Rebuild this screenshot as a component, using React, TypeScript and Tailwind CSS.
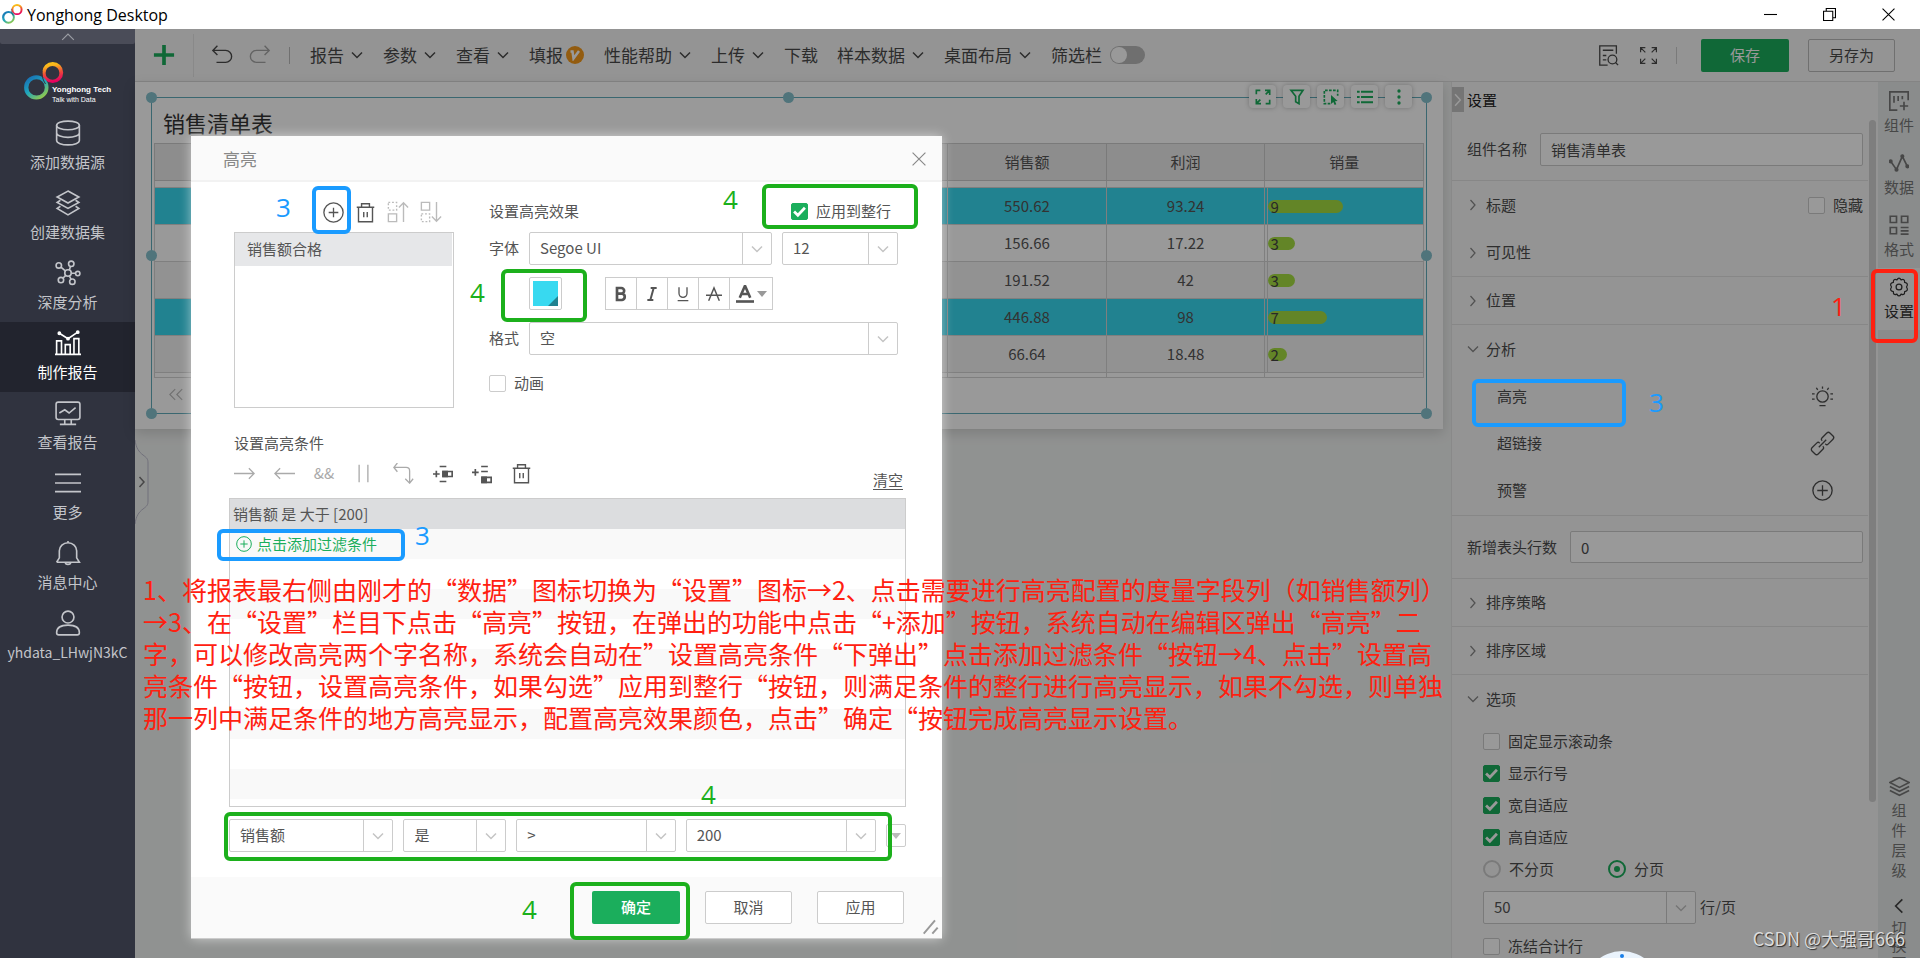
import { useState } from 'react';
import type { ReactNode } from 'react';
import clsx from 'clsx';

function Icon({ size = 20, className, sw = 1.5, children }: { size?: number; className?: string; sw?: number; children: ReactNode }) {
  return (
    <svg
      width={size}
      height={size}
      viewBox="0 0 24 24"
      fill="none"
      stroke="currentColor"
      strokeWidth={sw}
      className={clsx('shrink-0', className)}
      aria-hidden="true"
    >
      {children}
    </svg>
  );
}

function Chevron({ dir = 'down', size = 12, className, sw = 3 }: { dir?: 'down' | 'right' | 'left' | 'up'; size?: number; className?: string; sw?: number }) {
  const paths = {
    down: 'M2 7l10 10L22 7',
    right: 'M7 2l9 10-9 10',
    left: 'M17 2L7 12l10 10',
    up: 'M2 17L12 7l10 10',
  };
  return (
    <Icon size={size} sw={sw} className={className}>
      <path d={paths[dir]} />
    </Icon>
  );
}

function Rings({ size }: { size: number }) {
  return (
    <svg width={size} height={size} viewBox="0 0 40 40" className="shrink-0" aria-hidden="true">
      <defs>
        <linearGradient id="warm" x1="0" y1="0" x2="0.2" y2="1">
          <stop offset="0" stopColor="#fbc916" />
          <stop offset="0.25" stopColor="#f9b51c" />
          <stop offset="0.6" stopColor="#ee4a3a" />
          <stop offset="1" stopColor="#e6005f" />
        </linearGradient>
        <linearGradient id="cool" x1="0.1" y1="0" x2="0.8" y2="1">
          <stop offset="0" stopColor="#1765b3" />
          <stop offset="0.5" stopColor="#1fa6bd" />
          <stop offset="1" stopColor="#a4cf3a" />
        </linearGradient>
      </defs>
      <path
        fillRule="evenodd"
        fill="url(#warm)"
        d="M28.700 0a10.500 10.500 0 1 1 0 21a10.500 10.500 0 1 1 0-21zM28.500 4a6.900 6.900 0 1 0 0 13.800a6.900 6.900 0 1 0 0-13.800z"
      />
      <path
        fillRule="evenodd"
        fill="url(#cool)"
        d="M12.300 13.200a12.200 12.200 0 1 1 0 24.400a12.200 12.200 0 1 1 0-24.400zM12.600 17.200a8.200 8.200 0 1 0 0 16.400a8.200 8.200 0 1 0 0-16.400z"
      />
      <path d="M18 9c-.5 5 1 9 3.500 13" stroke="#30333f" strokeWidth="1" fill="none" />
    </svg>
  );
}

const TrashIcon = ({ className }: { className?: string }) => (
  <Icon size={21} className={className} sw={1.6}>
    <path d="M2 6h20M7.500 6V2h9v4M4 6v16.500h16V6M10 11.500v6M14 11.500v6" />
  </Icon>
);

const PlusCircle = ({ size = 22, className }: { size?: number; className?: string }) => (
  <Icon size={size} className={className}>
    <circle cx="12" cy="12" r="11" />
    <path d="M12 6.500v11M6.500 12h11" />
  </Icon>
);

function Select({ label, value, className }: { label: string; value: string; className?: string }) {
  return (
    <div className={clsx('relative h-[33px] rounded-xs border border-[#ccc] bg-white', className)}>
      <select aria-label={label} className="h-full w-full appearance-none bg-transparent pl-[10px] text-[15px] text-[#555] outline-none">
        <option>{value}</option>
      </select>
      <span className="pointer-events-none absolute inset-y-0 right-0 flex w-[29px] items-center justify-center border-l border-[#ccc] text-[#c4c4c4]">
        <Chevron size={12} />
      </span>
    </div>
  );
}

function Checkbox({ label, checked = false }: { label: string; checked?: boolean }) {
  const [on, setOn] = useState(checked);
  return (
    <label className="flex items-center gap-2 text-[15px]">
      <span className="relative flex h-[17px] w-[17px] shrink-0">
        <input
          type="checkbox"
          checked={on}
          onChange={() => setOn(!on)}
          className="h-[17px] w-[17px] appearance-none rounded-xs border border-[#ccc] bg-white checked:border-[#1bae5c] checked:bg-[#1bae5c]"
        />
        {on && (
          <Icon size={13} sw={5} className="pointer-events-none absolute top-0.5 left-0.5 text-white">
            <path d="M2 12l7 7L22 5" />
          </Icon>
        )}
      </span>
      {label}
    </label>
  );
}

const navItems = [
  {
    label: '添加数据源',
    icon: (
      <>
        <ellipse cx="12" cy="5" rx="10.500" ry="4" />
        <path d="M1.500 5v14c0 2.200 4.700 4 10.500 4s10.500-1.800 10.500-4V5M1.500 12c0 2.200 4.700 4 10.500 4s10.500-1.800 10.500-4" />
      </>
    ),
  },
  {
    label: '创建数据集',
    icon: <path d="M12 1l10 5.500L12 12 2 6.500zM5 9.500l-3 2L12 17l10-5.500-3-2M5 15l-3 2 10 6 10-6-3-2" />,
  },
  {
    label: '深度分析',
    icon: (
      <>
        <circle cx="12" cy="12" r="3" />
        <circle cx="3.500" cy="5" r="2.500" />
        <circle cx="15" cy="3.500" r="2.500" />
        <circle cx="21" cy="12.500" r="2" />
        <circle cx="5.500" cy="18.500" r="2.500" />
        <circle cx="16" cy="20" r="2.500" />
        <path d="M5.500 6.500l4 3.500M14.300 6l-1.100 3.200M15 12.200h4M7.300 16.800l2.600-2.600M13.300 14.800l1.600 3" />
      </>
    ),
  },
  {
    label: '制作报告',
    active: true,
    icon: (
      <>
        <path d="M0 22.500h24M1.500 22.500V10H6v12.500M9.500 22.500v-9H14v9M17.500 22.500V8H22v14.500" />
        <path d="M4 3l8 5 9-6" />
        <circle cx="4" cy="3" r="1" />
        <circle cx="12" cy="8" r="1" />
        <circle cx="21" cy="2" r="1" />
      </>
    ),
  },
  {
    label: '查看报告',
    icon: (
      <>
        <rect x="1" y="2" width="22" height="16" rx="2" />
        <path d="M4 12l5-3 4 3 6-5M9 18v4M15 18v4M4.500 22.500h15" />
      </>
    ),
  },
  { label: '更多', icon: <path d="M0 4h24M0 12h24M0 20h24" /> },
  {
    label: '消息中心',
    icon: (
      <path d="M12 1v2M1.500 20.500h21l-2.500-4V10a8 7.500 0 0 0-16 0v6.500l-2.500 4M9.500 20.500a2.500 2 0 0 0 5 0" />
    ),
  },
  {
    label: 'yhdata_LHwjN3kC',
    user: true,
    icon: (
      <>
        <circle cx="12" cy="6.500" r="5.500" />
        <path d="M1.500 21c0-5 4-7 10.500-7s10.500 2 10.500 7c0 1-.5 2-2 2h-17c-1.500 0-2-1-2-2z" />
      </>
    ),
  },
];

function Sidebar() {
  return (
    <nav className="flex w-[135px] shrink-0 flex-col bg-[#30333f] text-[#c3c5ca]">
      <button aria-label="收起" className="flex h-[15px] items-center justify-center rounded-b-xs bg-[#4a4c58] text-[#9b9da4]">
        <Chevron dir="up" size={14} sw={2} />
      </button>
      <div className="relative h-[68px] pt-[18px] pl-6">
        <Rings size={40} />
        <div className="absolute top-[39px] left-[52px] font-['Liberation_Sans'] leading-none text-white">
          <div className="text-[8px] leading-[13px] font-bold">Yonghong Tech</div>
          <div className="text-[7px] leading-[8px]">Talk with Data</div>
        </div>
      </div>
      {navItems.map((item) => (
        <a
          key={item.label}
          href="#"
          className={clsx(
            'flex h-[70px] flex-col items-center gap-1.5 pt-2 leading-5',
            item.user ? 'text-sm' : 'text-[15px]',
            item.active && 'bg-[#22242e] text-white',
          )}
        >
          <Icon size={26}>{item.icon}</Icon>
          <span>{item.label}</span>
        </a>
      ))}
    </nav>
  );
}

const menus = [
  { label: '报告', arrow: true },
  { label: '参数', arrow: true },
  { label: '查看', arrow: true },
  { label: '填报', badge: true },
  { label: '性能帮助', arrow: true },
  { label: '上传', arrow: true },
  { label: '下载' },
  { label: '样本数据', arrow: true },
  { label: '桌面布局', arrow: true },
];

function Toolbar() {
  return (
    <div className="flex h-[53px] shrink-0 items-center border-b border-[#ddd] bg-[#f7f7f7] pr-[25px] text-[17px] text-[#4a4a4a]">
      <div className="flex h-[43px] w-[59px] items-center border-r border-[#e4e4e4] pl-[18px]">
        <button aria-label="新建" className="text-[#1bae5c]">
          <Icon size={22} sw={4}>
            <path d="M12 1v22M1 12h22" />
          </Icon>
        </button>
      </div>
      <button aria-label="撤销" className="ml-[17px]">
        <Icon size={22}>
          <path d="M7 2L2 7l5 5M2 7h14a5.500 5.500 0 0 1 0 13H6" />
        </Icon>
      </button>
      <button aria-label="重做" className="ml-4 text-[#a5a5a5]">
        <Icon size={22}>
          <path d="M17 2l5 5-5 5M22 7H8a5.500 5.500 0 0 0 0 13h10" />
        </Icon>
      </button>
      <span className="mr-5 ml-[18px] h-[17px] w-px bg-[#bbb]" />
      <div className="flex items-center gap-[19px]">
        {menus.map((m) => (
          <button key={m.label} className="flex items-center whitespace-nowrap">
            {m.label}
            {m.arrow && <Chevron size={12} className="mr-px ml-[7px]" />}
            {m.badge && (
              <span className="ml-0.5 flex h-[18px] w-5 items-center justify-center">
                <span className="flex h-[18px] w-[18px] items-center justify-center rounded-full bg-[#f59a1c] text-white">
                  <Icon size={12} sw={5}>
                    <path d="M3 5h4l2 14L20 4" />
                  </Icon>
                </span>
              </span>
            )}
          </button>
        ))}
        <label className="flex items-center gap-2">
          筛选栏
          <input
            type="checkbox"
            role="switch"
            className="h-[18px] w-[35px] appearance-none rounded-full bg-[#b9b9b9] before:m-px before:block before:h-4 before:w-4 before:rounded-full before:bg-white"
          />
        </label>
      </div>
      <div className="ml-auto flex items-center">
        <button aria-label="预览">
          <Icon size={21}>
            <path d="M21 10V1H2v22h9M5.500 6h12M5.500 12h4M5.500 17h4" />
            <circle cx="16.500" cy="16.500" r="5" />
            <path d="M20 20l3 3" />
          </Icon>
        </button>
        <button aria-label="全屏" className="ml-5">
          <Icon size={19}>
            <path d="M2 8V2h6M2 2l6 6M16 2h6v6M22 2l-6 6M2 16v6h6M2 22l6-6M22 16v6h-6M22 22l-6-6" />
          </Icon>
        </button>
        <span className="mr-6 ml-[18px] h-[17px] w-px bg-[#ccc]" />
        <button className="h-[33px] w-[88px] rounded-xs bg-[#1bae5c] text-[15px] text-white">保存</button>
        <button className="ml-[19px] h-[33px] w-[87px] rounded-xs border border-[#bbb] text-[15px]">另存为</button>
      </div>
    </div>
  );
}

const rows = [
  { sales: '550.62', profit: '93.24', qty: 9, hit: true },
  { sales: '156.66', profit: '17.22', qty: 3 },
  { sales: '191.52', profit: '42', qty: 3, odd: true },
  { sales: '446.88', profit: '98', qty: 7, hit: true },
  { sales: '66.64', profit: '18.48', qty: 2, odd: true },
];

const columns = ['', '', '', '', '', '销售额', '利润', '销量'];

const handles = [
  '-top-[6px] -left-[6px]',
  '-top-[6px] left-1/2 -ml-[6px]',
  '-top-[6px] -right-[6px]',
  'top-1/2 -left-[6px] -mt-[6px]',
  'top-1/2 -right-[6px] -mt-[6px]',
  '-bottom-[6px] -left-[6px]',
  '-bottom-[6px] -right-[6px]',
];

const quickTools = [
  {
    label: '放大',
    icon: <path d="M2 8V2h6M15 2h7v7M22 2l-6 6M2 15v7h7M2 22l6-6M22 16v6h-6" />,
  },
  { label: '筛选', icon: <path d="M3 2h18l-6 9v11l-5-3v-8z" /> },
  {
    label: '选择',
    icon: (
      <>
        <path strokeDasharray="4 2" d="M11 22H2V2h20v8" />
        <path fill="currentColor" stroke="none" d="M12 9l10 9-4 .5 2 4.500-2.500 1-2-4.500-3.500 3z" />
      </>
    ),
  },
  { label: '明细', icon: <path strokeWidth="3" strokeDasharray="4 2 20" d="M0 4h24M0 12h24M0 20h24" /> },
  {
    label: '更多操作',
    icon: <path strokeWidth="5" strokeLinecap="round" d="M12 3v.1M12 12v.1M12 21v.1" />,
  },
];

function SpacerRow({ className }: { className: string }) {
  return (
    <tr className={className}>
      {columns.map((_, i) => (
        <td key={i} className="border border-[#d4d4d4]" />
      ))}
    </tr>
  );
}

function Report() {
  return (
    <div className="min-w-0 flex-1 bg-[#f1f3f2] pr-2">
      <div className="bg-white px-4 py-[15px] shadow-[0_4px_12px_rgba(0,0,0,0.15)]">
        <div className="relative h-[317px] border border-[#62acbb] px-0.5 pt-[9px]">
          {handles.map((pos) => (
            <span key={pos} className={clsx('absolute h-[11px] w-[11px] rounded-full bg-[#85c1ce]', pos)} />
          ))}
          <div className="absolute -top-[13px] right-[14px] flex gap-[7px]">
            {quickTools.map((t) => (
              <button
                key={t.label}
                aria-label={t.label}
                className="flex h-[23px] w-[27px] items-center justify-center rounded bg-white text-[#1bae5c] shadow-[0_0_5px_rgba(0,0,0,0.25)]"
              >
                <Icon size={16} sw={2.500}>
                  {t.icon}
                </Icon>
              </button>
            ))}
          </div>
          <h2 className="h-9 pl-[9px] text-[22px] leading-[30px] text-[#333]">销售清单表</h2>
          <table className="w-full table-fixed border-collapse text-center text-[15px] leading-5 text-[#555]">
            <thead>
              <tr className="h-[37px] bg-[#ebebeb]">
                {columns.map((h, i) => (
                  <th key={i} className="border border-[#ccc] font-normal">
                    {h}
                  </th>
                ))}
              </tr>
            </thead>
            <tbody>
              <SpacerRow className="h-[7px]" />
              {rows.map((r) => (
                <tr key={r.sales} className={clsx('h-[37px]', r.hit ? 'bg-[#38d9f0]' : r.odd ? 'bg-[#f4f4f4]' : 'bg-white')}>
                  {[0, 1, 2, 3, 4].map((i) => (
                    <td key={i} className="border border-[#d4d4d4]" />
                  ))}
                  <td className="border border-[#d4d4d4]">{r.sales}</td>
                  <td className="border border-[#d4d4d4]">{r.profit}</td>
                  <td className="border border-[#d4d4d4] pl-0.5 text-left">
                    <div className="flex h-9 items-center border-l border-[#d4d4d4]">
                      <div
                        className="h-[13px] rounded-lg bg-[#a5de42] pl-0.5 leading-[13px] text-[#444]"
                        style={{ width: `${r.qty * 8 + 3}px` }}
                      >
                        {r.qty}
                      </div>
                    </div>
                  </td>
                </tr>
              ))}
              <SpacerRow className="h-[5px]" />
            </tbody>
          </table>
          <div className="mt-[10px] flex pl-3 text-[#bbb]">
            <Chevron dir="left" size={13} sw={2} />
            <Chevron dir="left" size={13} sw={2} className="-ml-1.5" />
          </div>
        </div>
      </div>
      <button aria-label="展开" className="relative mt-[10px] block h-[86px] w-[14px] text-[#777]">
        <svg width="14" height="86" viewBox="0 0 14 86" fill="none" stroke="#bbc" className="absolute inset-0">
          <path d="M0 1c1 8 4 12 8 15 4 3 5 4 5 8v38c0 4-1 5-5 8-4 3-7 7-8 15" />
        </svg>
        <Chevron dir="right" size={12} className="mx-auto" />
      </button>
    </div>
  );
}

function SectionTitle({ label, open = false, line = true, children }: { label: string; open?: boolean; line?: boolean; children?: ReactNode }) {
  return (
    <div className={clsx('flex h-12 shrink-0 items-center pr-[5px] pl-[15px]', line && 'border-b border-[#e2e2e2]')}>
      <button className="flex items-center gap-[7px]">
        <Chevron dir={open ? 'down' : 'right'} size={12} sw={2.500} className="text-[#888]" />
        {label}
      </button>
      <div className="ml-auto">{children}</div>
    </div>
  );
}

const analysis = [
  {
    label: '高亮',
    icon: (
      <>
        <circle cx="12" cy="12" r="6.500" />
        <path d="M8.500 22.500h7M0 9h3M0 15h3M21 9h3M21 15h3M5 2l1.500 2.500M19 2l-1.500 2.500M12 .5v2.500" />
      </>
    ),
  },
  {
    label: '超链接',
    icon: (
      <g transform="rotate(-45 12 12)">
        <path d="M10 14.500V15a2 2 0 0 1-2 2H0a2.500 2.500 0 0 1-2.500-2.500v-5A2.500 2.500 0 0 1 0 7h8a2 2 0 0 1 2 2v.5M14 9.500V9a2 2 0 0 1 2-2h8a2.500 2.500 0 0 1 2.500 2.500v5A2.500 2.500 0 0 1 24 17h-8a2 2 0 0 1-2-2v-.5M6 12h12" />
      </g>
    ),
  },
  {
    label: '预警',
    icon: (
      <>
        <circle cx="12" cy="12" r="11" />
        <path d="M12 6v12M6 12h12" />
      </>
    ),
  },
];

function SettingsPanel() {
  return (
    <aside className="relative flex w-[427px] shrink-0 overflow-hidden border-l border-[#e4e4e4] bg-[#f7f7f7] text-[15px] text-[#4d4d4d]">
      <button aria-label="收起面板" className="absolute top-[5px] left-0 flex h-[25px] w-3 items-center justify-center bg-[#c4c4c4] text-white">
        <Chevron dir="right" size={14} sw={2.500} />
      </button>
      <div className="flex h-full w-[416px] flex-col">
        <div className="flex h-[36px] shrink-0 items-center pl-[15px] text-[#222]">设置</div>
        <div className="flex h-[63px] shrink-0 items-center border-b border-[#e2e2e2] pr-[5px] pl-[15px]">
          <label htmlFor="comp-name" className="w-[73px]">
            组件名称
          </label>
          <input id="comp-name" defaultValue="销售清单表" className="h-[33px] min-w-0 flex-1 rounded-xs border border-[#ccc] bg-white px-[10px]" />
        </div>
        <SectionTitle label="标题" line={false}>
          <Checkbox label="隐藏" />
        </SectionTitle>
        <SectionTitle label="可见性" />
        <SectionTitle label="位置" />
        <SectionTitle label="分析" open line={false} />
        <div className="flex h-[143px] shrink-0 flex-col border-b border-[#e2e2e2]">
          {analysis.map((a) => (
            <button key={a.label} className="flex h-[47px] items-center justify-between pr-[35px] pl-[45px]">
              {a.label}
              <Icon size={21} className="overflow-visible">
                {a.icon}
              </Icon>
            </button>
          ))}
        </div>
        <div className="flex h-[63px] shrink-0 items-center border-b border-[#e2e2e2] pr-[5px] pl-[15px]">
          <label htmlFor="header-rows" className="w-[103px]">
            新增表头行数
          </label>
          <input id="header-rows" defaultValue="0" className="h-8 min-w-0 flex-1 rounded-xs border border-[#ccc] bg-white px-[10px]" />
        </div>
        <SectionTitle label="排序策略" />
        <SectionTitle label="排序区域" />
        <SectionTitle label="选项" open line={false} />
        <div className="flex flex-col gap-2 pt-1.5 pl-[31px]">
          {[
            { label: '固定显示滚动条', checked: false },
            { label: '显示行号', checked: true },
            { label: '宽自适应', checked: true },
            { label: '高自适应', checked: true },
          ].map((o) => (
            <div key={o.label} className="flex h-6 items-center">
              <Checkbox {...o} />
            </div>
          ))}
          <div className="flex h-6 items-center">
            {['不分页', '分页'].map((p, i) => (
              <label key={p} className="flex w-[125px] items-center gap-2">
                <input
                  type="radio"
                  name="paging"
                  defaultChecked={i === 1}
                  className="flex h-[18px] w-[18px] appearance-none items-center justify-center rounded-full border-2 border-[#ccc] checked:border-[#1bae5c] checked:before:h-1.5 checked:before:w-1.5 checked:before:rounded-full checked:before:bg-[#1bae5c]"
                />
                {p}
              </label>
            ))}
          </div>
          <div className="my-0.5 flex items-center gap-1">
            <Select label="每页行数" value="50" className="w-[213px]" />
            行/页
          </div>
          <div className="flex h-6 items-center">
            <Checkbox label="冻结合计行" />
          </div>
        </div>
      </div>
      <div className="absolute top-[38px] right-0.5 h-[682px] w-[7px] rounded-full bg-[#d2d2d2]" />
    </aside>
  );
}

const tabs = [
  {
    label: '组件',
    icon: <path d="M23 11V1H1v22h9M6 6v8M11 6v6M16 6v4M18 13v10M13 18h10" />,
  },
  {
    label: '数据',
    icon: (
      <>
        <path d="M2 10l7 10 7-16 6 12" />
        <circle cx="2" cy="10" r="1.500" fill="currentColor" />
        <circle cx="9" cy="20" r="1.500" fill="currentColor" />
        <circle cx="16" cy="4" r="1.500" fill="currentColor" />
        <circle cx="22" cy="16" r="1.500" fill="currentColor" />
      </>
    ),
  },
  {
    label: '格式',
    icon: <path d="M1.500 1.500h7.500v7.500H1.500zM15 1.500h7.500v7.500H15zM1.500 15h7.500v7.500H1.500zM14 15h9.500M14 19h9.500M14 23h9.500" />,
  },
  {
    label: '设置',
    active: true,
    icon: (
      <>
        <path
          strokeLinejoin="round"
          d="M9.500 3.500Q12 -1 14.500 3.500Q19 1.500 18.800 6.500Q24 7.500 21 12Q24 16.500 18.800 17.500Q19 22.500 14.500 20.500Q12 25 9.500 20.500Q5 22.500 5.200 17.500Q0 16.500 3 12Q0 7.500 5.200 6.500Q5 1.500 9.500 3.500z"
        />
        <circle cx="12" cy="12" r="3.500" />
      </>
    ),
  },
];

function TabRail() {
  return (
    <div className="flex w-[42px] shrink-0 flex-col items-center overflow-hidden bg-[#e6eae9] text-[15px] text-[#777]">
      {tabs.map((t) => (
        <button
          key={t.label}
          className={clsx('flex h-[62px] w-full shrink-0 flex-col items-center gap-1 pt-[9px] leading-5', t.active && 'bg-[#f7f7f7] text-[#333]')}
        >
          <Icon size={20} sw={t.active ? 1.5 : 2}>
            {t.icon}
          </Icon>
          {t.label}
        </button>
      ))}
      <button className="mt-auto flex w-5 shrink-0 flex-col items-center gap-[3px] leading-5">
        <Icon size={21} sw={1.8}>
          <path d="M12 2l11 5.500L12 13 1 7.500zM1 12l11 5.500L23 12M1 16.500L12 22l11-5.500" />
        </Icon>
        <span className="w-[15px] break-all">组件层级</span>
      </button>
      <button className="mt-[18px] -mb-[14px] flex w-5 shrink-0 flex-col items-center gap-1 leading-[18px]">
        <Chevron dir="left" size={16} sw={2.500} className="text-[#444]" />
        <span className="w-[15px] break-all">切换页</span>
      </button>
    </div>
  );
}

const styleButtons = [
  { label: '加粗', icon: <path strokeWidth="4" d="M6 3v18h7.500a4.800 4.800 0 0 0 0-9.500H6h6.500a4.200 4.200 0 0 0 0-8.500z" /> },
  { label: '斜体', icon: <path strokeWidth="3" d="M10 3h9M5 21h9M14.500 3l-5 18" /> },
  { label: '下划线', icon: <path strokeWidth="2" d="M6 2v9a6 6 0 0 0 12 0V2M4 22h16" /> },
  { label: '删除线', icon: <path strokeWidth="2.200" d="M4 22L12 3l8 19M0 14h24" /> },
];

const conditionRows = Array.from({ length: 8 }, (_, i) => i);

function HighlightDialog() {
  return (
    <div
      role="dialog"
      aria-label="高亮"
      className="absolute top-[136px] left-[191px] flex w-[751px] flex-col rounded-xs bg-white text-[15px] text-[#555] shadow-[0_0_12px_rgba(255,255,255,0.55)]"
    >
      <div className="flex h-[46px] items-center justify-between border-b-2 border-[#f2f2f2] bg-[#fafafa] pt-px pr-4 pl-8 text-[17px] text-[#888]">
        高亮
        <button aria-label="关闭">
          <Icon size={14} sw={2}>
            <path d="M1 1l22 22M23 1L1 23" />
          </Icon>
        </button>
      </div>

      <div className="flex px-[43px] pt-[10px]">
        <div className="w-[220px]">
          <div className="flex h-10 items-center gap-[11px] pl-[89px]">
            <button aria-label="添加">
              <PlusCircle size={21} className="text-[#555]" />
            </button>
            <button aria-label="删除">
              <TrashIcon />
            </button>
            <button aria-label="上移" className="text-[#bbb]">
              <Icon size={22}>
                <path d="M1.500 14h9v8.500h-9zM18 23V2M13 7l5-5 5 5" />
                <path strokeDasharray="2 2" d="M1.500 1.500h9V10h-9z" />
              </Icon>
            </button>
            <button aria-label="下移" className="text-[#bbb]">
              <Icon size={22}>
                <path d="M1.500 1.500h9V10h-9zM18 1v21M13 17l5 5 5-5" />
                <path strokeDasharray="2 2" d="M1.500 14h9v8.500h-9z" />
              </Icon>
            </button>
          </div>
          <div className="h-[176px] border border-[#ccc]">
            <div className="mr-px flex h-[33px] items-center bg-[#e6e7e9] pl-3">销售额合格</div>
          </div>
        </div>

        <div className="ml-[35px] w-[409px]">
          <div className="flex h-10 items-center justify-between pr-[7px] pb-0.5">
            设置高亮效果
            <Checkbox label="应用到整行" checked />
          </div>
          <div className="flex items-center">
            <span className="w-10">字体</span>
            <Select label="字体" value="Segoe UI" className="w-[243px]" />
            <Select label="字号" value="12" className="ml-[10px] w-[116px]" />
          </div>
          <div className="my-3 flex items-center pl-10">
            <button aria-label="背景色" className="h-[33px] w-[33px] rounded-xs border border-[#ccc] p-[3px]">
              <span className="flex h-full items-end justify-end bg-[#38d9f0]">
                <svg width="10" height="10" viewBox="0 0 10 10" aria-hidden="true">
                  <path d="M10 0v10H0z" fill="#218290" />
                </svg>
              </span>
            </button>
            <div className="ml-[43px] flex h-[33px] border border-[#ccc]">
              {styleButtons.map((b) => (
                <button key={b.label} aria-label={b.label} className="flex w-[31px] items-center justify-center border-r border-[#ccc]">
                  <Icon size={16}>{b.icon}</Icon>
                </button>
              ))}
              <button aria-label="字体颜色" className="flex w-[42px] items-center justify-center gap-[3px]">
                <Icon size={18}>
                  <path strokeWidth="3.500" d="M5 17l7-16 7 16M7 12h10" />
                  <path strokeWidth="3.500" d="M0 22h24" />
                </Icon>
                <svg width="10" height="6" viewBox="0 0 10 6" fill="#999" aria-hidden="true">
                  <path d="M0 0h10L5 6z" />
                </svg>
              </button>
            </div>
          </div>
          <div className="flex items-center">
            <span className="w-10">格式</span>
            <Select label="格式" value="空" className="w-[369px]" />
          </div>
          <div className="mt-[17px]">
            <Checkbox label="动画" />
          </div>
        </div>
      </div>

      <div className="mt-[23px] pr-9 pl-[38px]">
        <div className="pl-[5px] leading-6">设置高亮条件</div>
        <div className="flex h-[43px] items-center gap-[19px] pb-1.5 pl-[5px]">
          <Icon size={21} className="text-[#aaa]">
            <path d="M0 12h23M17 6l6 6-6 6" />
          </Icon>
          <Icon size={21} className="text-[#aaa]">
            <path d="M24 12H1M7 6l-6 6 6 6" />
          </Icon>
          <span className="flex w-5 justify-center text-[15px] text-[#aaa]">&amp;&amp;</span>
          <Icon size={21} className="text-[#aaa]">
            <path d="M7 2v20M17 2v20" />
          </Icon>
          <Icon size={21} className="text-[#aaa]">
            <path d="M5 0L1 5l4 5M1 5h14c3 0 4 1 4 4v14M14 18l5 5 4-5" />
          </Icon>
          <Icon size={20} sw={2}>
            <path d="M0 12h8M4 8v8M8 3h8M8 21h8M12 9h11v6H12z" />
            <path fill="currentColor" d="M12 9h5v6h-5z" />
          </Icon>
          <Icon size={20} sw={2}>
            <path d="M0 10h8M4 6v8M11 3h8M11 9h8M12 16h11v6H12z" />
            <path fill="currentColor" d="M12 16h5v6h-5z" />
          </Icon>
          <button aria-label="删除条件">
            <TrashIcon />
          </button>
          <a href="#" className="mt-[14px] mr-[3px] ml-auto border-b border-[#555] leading-[18px]">
            清空
          </a>
        </div>
        <div className="border border-[#ccc] pb-[7px]">
          <div className="flex h-[30px] items-center bg-[#dcdddf] pl-[3px]">销售额 是 大于 [200]</div>
          <button className="flex h-[30px] w-full items-center gap-[5px] bg-[#f9f9f9] pl-1.5 text-[#1bae5c]">
            <PlusCircle size={16} />
            点击添加过滤条件
          </button>
          {conditionRows.map((i) => (
            <div key={i} className="h-[30px] odd:bg-white even:bg-[#f9f9f9]" />
          ))}
        </div>
        <div className="mt-3 flex items-center gap-[10px]">
          <Select label="字段" value="销售额" className="w-[165px]" />
          <Select label="关系" value="是" className="w-[103px]" />
          <Select label="运算符" value=">" className="w-[160px]" />
          <Select label="值" value="200" className="w-[191px]" />
          <button aria-label="值类型" className="flex h-[23px] w-5 items-center justify-center rounded-xs border border-[#ccc]">
            <svg width="10" height="6" viewBox="0 0 10 6" fill="#bbb" aria-hidden="true">
              <path d="M0 0h10L5 6z" />
            </svg>
          </button>
        </div>
      </div>

      <div className="relative mt-[25px] flex h-[62px] items-center justify-end gap-[25px] border-b border-[#ccc] bg-[#fafafa] pr-[38px]">
        <button className="h-[33px] w-[88px] rounded-xs bg-[#1bae5c] font-medium text-white">确定</button>
        <button className="h-[33px] w-[87px] rounded-xs border border-[#ccc] bg-white">取消</button>
        <button className="h-[33px] w-[87px] rounded-xs border border-[#ccc] bg-white">应用</button>
        <Icon size={16} className="absolute right-[3px] bottom-[3px] text-[#999]" sw={3}>
          <path d="M1 22L18 2M14 22l8-9" />
        </Icon>
      </div>
    </div>
  );
}

const frames = [
  'top-[186px] left-[312px] h-12 w-[39px] border-[#1a9bff]',
  'top-[529px] left-[217px] h-8 w-[188px] border-[#1a9bff]',
  'top-[379px] left-[1472px] h-12 w-[154px] border-[#1a9bff]',
  'top-[184px] left-[762px] h-[45px] w-[156px] border-[#1cb01c]',
  'top-[269px] left-[501px] h-[53px] w-[86px] border-[#1cb01c]',
  'top-[812px] left-[224px] h-[49px] w-[668px] border-[#1cb01c]',
  'top-[882px] left-[570px] h-[58px] w-[120px] border-[#1cb01c]',
  'top-[269px] left-[1871px] h-[74px] w-[47px] border-[#ff2010]',
];

const steps = [
  { n: 3, pos: 'top-[191px] left-[276px] text-[#1a9bff]' },
  { n: 3, pos: 'top-[519px] left-[415px] text-[#1a9bff]' },
  { n: 3, pos: 'top-[386px] left-[1649px] text-[#1a9bff]' },
  { n: 4, pos: 'top-[183px] left-[723px] text-[#1cb01c]' },
  { n: 4, pos: 'top-[276px] left-[470px] text-[#1cb01c]' },
  { n: 4, pos: 'top-[778px] left-[701px] text-[#1cb01c]' },
  { n: 4, pos: 'top-[893px] left-[522px] text-[#1cb01c]' },
  { n: 1, pos: 'top-[290px] left-[1831px] text-[#ff2010]' },
];

const noteLines = [
  '1、将报表最右侧由刚才的“数据”图标切换为“设置”图标→2、点击需要进行高亮配置的度量字段列（如销售额列）',
  '→3、在“设置”栏目下点击“高亮”按钮，在弹出的功能中点击“+添加”按钮，系统自动在编辑区弹出“高亮”二',
  '字，可以修改高亮两个字名称，系统会自动在”设置高亮条件“下弹出”点击添加过滤条件“按钮→4、点击”设置高',
  '亮条件“按钮，设置高亮条件，如果勾选”应用到整行“按钮，则满足条件的整行进行高亮显示，如果不勾选，则单独',
  '那一列中满足条件的地方高亮显示，配置高亮效果颜色，点击”确定“按钮完成高亮显示设置。',
];

function Annotations() {
  return (
    <div className="pointer-events-none absolute inset-0 overflow-hidden">
      {frames.map((f) => (
        <div key={f} className={clsx('absolute rounded-md border-4', f)} />
      ))}
      {steps.map((s) => (
        <span key={s.pos} className={clsx("absolute font-['Open_Sans'] text-[26px] leading-8", s.pos)}>
          {s.n}
        </span>
      ))}
      <p className="absolute top-[573px] left-[143px] text-[25px] leading-8 whitespace-nowrap text-[#ff2010]">
        {noteLines.map((line) => (
          <span key={line} className="block">
            {line}
          </span>
        ))}
      </p>
      <div className="absolute right-[260px] -bottom-[69px] flex h-[76px] w-[76px] justify-center rounded-full bg-[#eaf3fc] pt-[3px]">
        <span className="h-1 w-1 rounded-full bg-[#1a7fe8]" />
      </div>
      <span className="absolute right-[15px] bottom-[6px] text-[18px] leading-7 text-[#dcdcdc] [text-shadow:1px_1px_1px_rgba(0,0,0,0.7)]">
        CSDN @大强哥666
      </span>
    </div>
  );
}

export default function App() {
  return (
    <div lang="zh-CN" className="relative flex h-screen flex-col overflow-hidden bg-white font-['Noto_Sans_CJK_SC',sans-serif]">
      <header className="flex h-[29px] shrink-0 items-center gap-1 pr-[25px] pl-0.5 text-black">
        <Rings size={21} />
        <span className="font-['Open_Sans'] text-base">Yonghong Desktop</span>
        <div className="ml-auto flex items-center gap-[46px]">
          <button aria-label="最小化">
            <Icon size={13} sw={2}>
              <path d="M0 12h24" />
            </Icon>
          </button>
          <button aria-label="还原">
            <Icon size={13} sw={2}>
              <path d="M1 6h17v17H1zM6 6V1h17v17h-5" />
            </Icon>
          </button>
          <button aria-label="关闭窗口">
            <Icon size={13} sw={2}>
              <path d="M1 1l22 22M23 1L1 23" />
            </Icon>
          </button>
        </div>
      </header>
      <div className="flex min-h-0 flex-1">
        <Sidebar />
        <main className="relative flex min-w-0 flex-1 flex-col">
          <Toolbar />
          <div className="flex min-h-0 flex-1">
            <Report />
            <SettingsPanel />
            <TabRail />
          </div>
          <div className="absolute inset-0 bg-black/40" />
        </main>
      </div>
      <HighlightDialog />
      <Annotations />
    </div>
  );
}
